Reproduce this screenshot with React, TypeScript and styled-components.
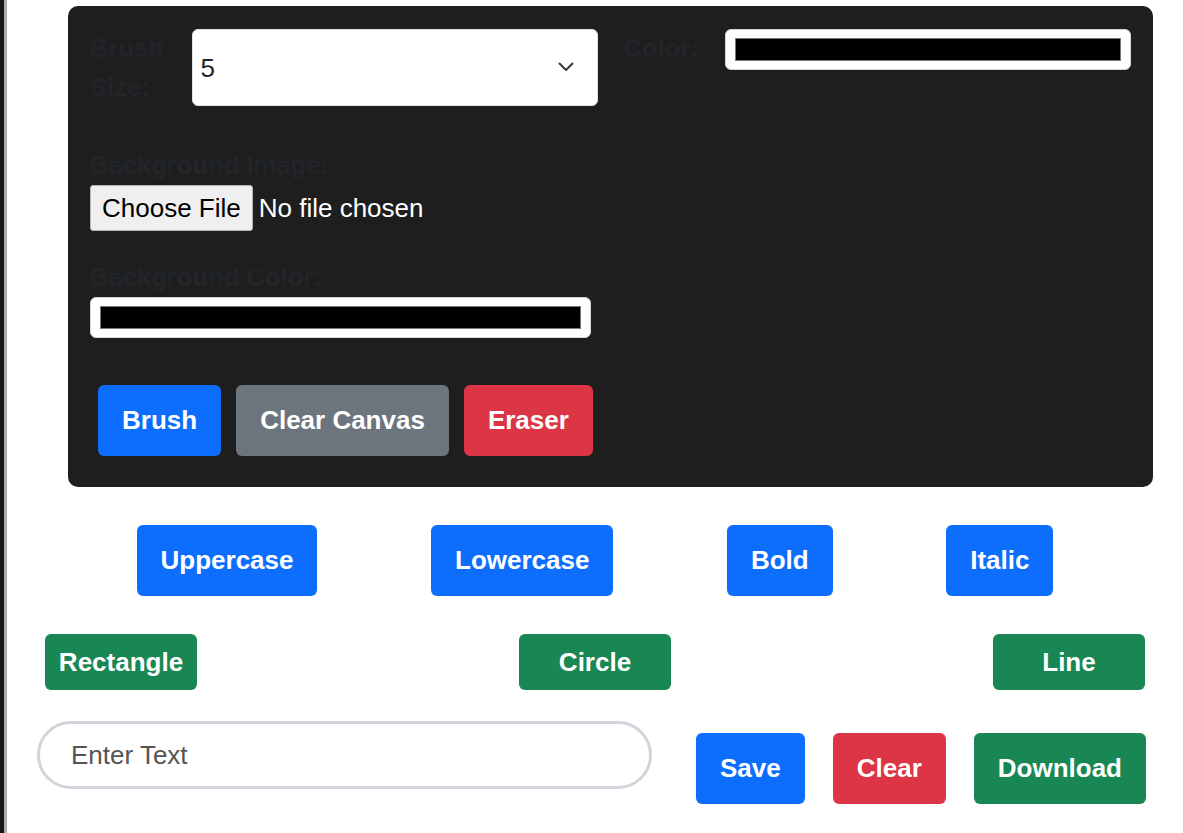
import styled, { createGlobalStyle } from 'styled-components';

const GlobalStyle = createGlobalStyle`
  * {
    box-sizing: border-box;
  }
  body {
    margin: 0;
    min-height: 100vh;
    background: #fff;
    font-family: "Liberation Sans", Arial, sans-serif;
    box-shadow: inset 4px 0 0 #161616, inset 7px 0 0 #a9a9a9;
  }
`;

type Variant = 'primary' | 'secondary' | 'danger' | 'success';

const colors: Record<Variant, string> = {
  primary: '#0d6efd',
  secondary: '#6c757d',
  danger: '#dc3545',
  success: '#198754',
};

const App = () => {
  return (
    <Page>
      <GlobalStyle />
      <Panel>
        <TopRow>
          <Field>
            <Label>Brush Size:</Label>
            <SelectWrap>
              <Select defaultValue="5">
                {[1, 2, 3, 4, 5, 10, 15, 20].map((n) => (
                  <option key={n} value={n}>
                    {n}
                  </option>
                ))}
              </Select>
              <Chevron width="16" height="10" viewBox="0 0 16 10">
                <path d="M1.5 1.5 8 8l6.5-6.5" fill="none" stroke="#343a40" strokeWidth="2" strokeLinecap="round" strokeLinejoin="round" />
              </Chevron>
            </SelectWrap>
          </Field>
          <Field>
            <Label>Color:</Label>
            <ColorInput type="color" defaultValue="#000000" $width="80%" />
          </Field>
        </TopRow>

        <Label as="div" $top={39}>Background Image:</Label>
        <FileRow>
          <FileButton type="button">Choose File</FileButton>
          <FileName>No file chosen</FileName>
        </FileRow>

        <Label as="div" $top={27}>Background Color:</Label>
        <ColorInput type="color" defaultValue="#000000" $width="501px" />

        <ToolRow>
          <Button $variant="primary">Brush</Button>
          <Button $variant="secondary">Clear Canvas</Button>
          <Button $variant="danger">Eraser</Button>
        </ToolRow>
      </Panel>

      <TextRow>
        <Button $variant="primary">Uppercase</Button>
        <Button $variant="primary">Lowercase</Button>
        <Button $variant="primary">Bold</Button>
        <Button $variant="primary">Italic</Button>
      </TextRow>

      <ShapeRow>
        <ShapeButton>Rectangle</ShapeButton>
        <ShapeButton>Circle</ShapeButton>
        <ShapeButton>Line</ShapeButton>
      </ShapeRow>

      <BottomRow>
        <TextInput placeholder="Enter Text" />
        <Actions>
          <Button $variant="primary">Save</Button>
          <Button $variant="danger">Clear</Button>
          <Button $variant="success">Download</Button>
        </Actions>
      </BottomRow>
    </Page>
  );
};

const Page = styled.div`
  padding-top: 6px;
`;

const Panel = styled.div`
  margin-left: 68px;
  width: 1085px;
  background: #1e1e1e;
  border-radius: 10px;
  padding: 23px 22px 31px;
`;

const TopRow = styled.div`
  display: grid;
  grid-template-columns: 1fr 1fr;
  column-gap: 26px;
`;

const Field = styled.div`
  display: flex;
  align-items: flex-start;
`;

const Label = styled.label<{ $top?: number }>`
  flex: 1;
  min-width: 0;
  padding-right: 26px;
  margin-top: ${(p) => p.$top ?? 0}px;
  font-size: 25.6px;
  font-weight: 700;
  line-height: 39px;
  color: #212529;
`;

const SelectWrap = styled.div`
  position: relative;
  flex-shrink: 0;
  width: 80%;
  height: 77px;
`;

const Select = styled.select`
  appearance: none;
  width: 100%;
  height: 100%;
  padding: 0 40px 0 8px;
  border: 1px solid #dee2e6;
  border-radius: 6px;
  background: #fff;
  color: #212529;
  font-family: "Liberation Sans", Arial, sans-serif;
  font-size: 26px;
  outline: none;
`;

const Chevron = styled.svg`
  position: absolute;
  right: 24px;
  top: 33px;
  pointer-events: none;
`;

const ColorInput = styled.input<{ $width: string }>`
  -webkit-appearance: none;
  appearance: none;
  display: block;
  flex-shrink: 0;
  width: ${(p) => p.$width};
  height: 41px;
  padding: 8px 9px;
  margin: 0;
  background: #fff;
  border: 1px solid #d4d4d4;
  border-radius: 6px;
  cursor: pointer;
  &::-webkit-color-swatch-wrapper {
    padding: 0;
  }
  &::-webkit-color-swatch {
    border: 1px solid #777;
    border-radius: 0;
  }
`;

const FileRow = styled.div`
  display: flex;
  align-items: center;
  height: 46px;
`;

const FileButton = styled.button`
  height: 46px;
  padding: 0 11px;
  background: #efefef;
  border: 1px solid #b5b5b5;
  border-radius: 3px;
  color: #000;
  font-family: "Liberation Sans", Arial, sans-serif;
  font-size: 26px;
`;

const FileName = styled.span`
  margin-left: 6px;
  color: #fff;
  font-size: 26px;
`;

const ToolRow = styled.div`
  display: flex;
  gap: 15px;
  margin-top: 47px;
  padding-left: 8px;
`;

const Button = styled.button<{ $variant: Variant }>`
  height: 71px;
  padding: 0 24px;
  border: none;
  border-radius: 6px;
  background: ${(p) => colors[p.$variant]};
  color: #fff;
  font-family: "Liberation Sans", Arial, sans-serif;
  font-size: 26px;
  font-weight: 700;
  white-space: nowrap;
  cursor: pointer;
`;

const TextRow = styled.div`
  display: flex;
  justify-content: space-evenly;
  margin: 38px 16px 0 23px;
`;

const ShapeRow = styled.div`
  display: flex;
  justify-content: space-between;
  margin: 38px 38px 0 45px;
`;

const ShapeButton = styled.button`
  width: 152px;
  height: 56px;
  padding: 0;
  border: none;
  border-radius: 6px;
  background: ${colors.success};
  color: #fff;
  font-family: "Liberation Sans", Arial, sans-serif;
  font-size: 26px;
  font-weight: 700;
  cursor: pointer;
`;

const BottomRow = styled.div`
  display: flex;
  align-items: flex-start;
  margin-top: 31px;
  padding-left: 37px;
`;

const TextInput = styled.input`
  width: 615px;
  height: 68px;
  padding: 0 31px;
  border: 3px solid #d1d5db;
  border-radius: 34px;
  font-family: "Liberation Sans", Arial, sans-serif;
  font-size: 26px;
  color: #212529;
  outline: none;
  &::placeholder {
    color: #555;
  }
`;

const Actions = styled.div`
  display: flex;
  gap: 28px;
  margin: 12px 0 0 44px;
`;

export default App;
